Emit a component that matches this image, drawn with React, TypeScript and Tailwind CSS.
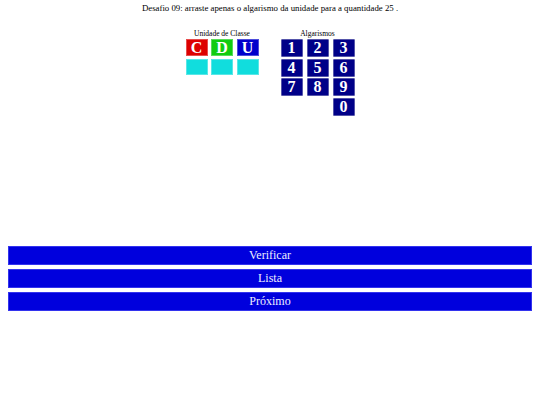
const LETTERS = [
  { label: "C", bg: "bg-[#dd0000]" },
  { label: "D", bg: "bg-[#11cc11]" },
  { label: "U", bg: "bg-[#0000cc]" },
];

const DIGITS = ["1", "2", "3", "4", "5", "6", "7", "8", "9"];

export default function App() {
  return (
    <div className="w-[540px] h-[405px] bg-white font-['Liberation_Serif',serif] text-black">
      <p className="pt-[3px] text-center text-[8.8px] leading-[11px]">
        Desafio 09: arraste apenas o algarismo da unidade para a quantidade 25 .
      </p>

      <div className="mt-[16px] flex justify-center gap-[22px]">
        <div className="flex flex-col items-center">
          <span className="text-[7.5px] leading-[8px] mb-[1px]">Unidade de Classe</span>
          <div className="grid grid-cols-3 gap-x-[3.5px] gap-y-[3px]">
            {LETTERS.map((l) => (
              <div
                key={l.label}
                className={`${l.bg} w-[22px] h-[17px] border border-white/30 flex items-center justify-center text-white font-bold text-[16px] leading-none`}
              >
                {l.label}
              </div>
            ))}
            {LETTERS.map((l) => (
              <div key={"slot" + l.label} className="bg-[#11dddd] w-[22px] h-[16px] border border-white/30" />
            ))}
          </div>
        </div>

        <div className="flex flex-col items-center">
          <span className="text-[7.5px] leading-[8px] mb-[1px]">Algarismos</span>
          <div className="grid grid-cols-3 gap-x-[4px] gap-y-[1.5px]">
            {DIGITS.map((d) => (
              <div
                key={d}
                className="bg-[#000088] w-[22px] h-[18px] border border-[#5555aa] rounded-[1px] flex items-center justify-center text-white font-bold text-[16px] leading-none"
              >
                {d}
              </div>
            ))}
            <div />
            <div />
            <div className="bg-[#000088] w-[22px] h-[18px] border border-[#5555aa] rounded-[1px] flex items-center justify-center text-white font-bold text-[16px] leading-none">
              0
            </div>
          </div>
        </div>
      </div>

      <div className="mt-[130px] px-[8px] flex flex-col gap-[3.5px]">
        {["Verificar", "Lista", "Próximo"].map((t) => (
          <div
            key={t}
            className="w-full h-[19.5px] bg-[#0000dd] border border-[#3333ee] flex items-center justify-center"
          >
            <span className="font-['Liberation_Serif','Times_New_Roman',serif] text-[#eeeeff] text-[12px] leading-none">
              {t}
            </span>
          </div>
        ))}
      </div>
    </div>
  );
}
